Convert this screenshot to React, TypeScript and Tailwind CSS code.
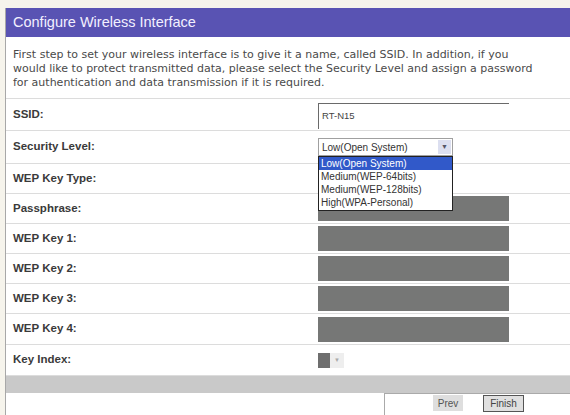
import React from "react";

const rows: [string, number][] = [
  ["WEP Key Type:", 30],
  ["Passphrase:", 30],
  ["WEP Key 1:", 30],
  ["WEP Key 2:", 30],
  ["WEP Key 3:", 30],
  ["WEP Key 4:", 31],
];

function Row({ label, h, children }: { label: string; h: number; children?: React.ReactNode }) {
  return (
    <div className="flex items-center border-b border-[#dcdcdc]" style={{ height: h }}>
      <div className="w-[312px] pl-[7px] text-[11.5px] font-bold text-[#3a3a3a]">{label}</div>
      <div className="flex h-full flex-1 items-center">{children}</div>
    </div>
  );
}

function GrayBox() {
  return <div className="h-[25px] w-[191px] bg-[#767776]" />;
}

export default function App() {
  return (
    <div
      className="h-[415px] w-[570px] overflow-hidden bg-[#f6f4ec] pt-[8px] pl-[5px]"
      style={{ fontFamily: '"Liberation Sans", Arial, sans-serif' }}
    >
      <div className="h-full border-l border-[#a8a8a8] bg-white">
        {/* header */}
        <div className="flex h-[29px] items-center bg-[#5953b3] pl-[7px] text-[14.5px] text-[#f2f0ff]">
          Configure Wireless Interface
        </div>
        {/* description */}
        <div
          className="border-b border-[#dcdcdc] px-[7px] pt-[11px] pb-[8px] text-[11px] leading-[14px] text-[#4a4a4a]"
          style={{ fontFamily: '"DejaVu Sans", Verdana, sans-serif' }}
        >
          First step to set your wireless interface is to give it a name, called SSID. In addition, if you
          <br />
          would like to protect transmitted data, please select the Security Level and assign a password
          <br />
          for authentication and data transmission if it is required.
        </div>

        <Row label="SSID:" h={32}>
          <div className="mt-[4px] flex h-[26px] w-[191px] items-center self-start border-t border-l border-[#6a6a6a] pl-[3px] text-[9.5px] text-[#444]">
            RT-N15
          </div>
        </Row>

        <Row label="Security Level:" h={33}>
          <div className="relative">
            <div className="flex h-[18px] w-[135px] items-center border border-[#a0a0a0] bg-white">
              <span className="flex-1 pl-[3px] text-[10px] text-[#333]">Low(Open System)</span>
              <span className="mr-[1px] flex h-[14px] w-[13px] items-center justify-center bg-[#dcdff0] text-[7px] text-[#556]">
                ▼
              </span>
            </div>
            {/* open dropdown list */}
            <div className="absolute top-[18px] left-0 z-10 w-[135px] border border-[#222] bg-white text-[10px] leading-[13px] text-[#333]">
              <div className="bg-[#3159c9] pl-[2px] text-white">Low(Open System)</div>
              <div className="pl-[2px]">Medium(WEP-64bits)</div>
              <div className="pl-[2px]">Medium(WEP-128bits)</div>
              <div className="pl-[2px] pb-[1px]">High(WPA-Personal)</div>
            </div>
          </div>
        </Row>

        {rows.map(([label, h]) => (
          <Row key={label} label={label} h={h}>
            {label !== "WEP Key Type:" && <GrayBox />}
          </Row>
        ))}

        <Row label="Key Index:" h={31}>
          <div className="flex h-[15px] items-center">
            <div className="h-[15px] w-[12px] bg-[#6e6e6e]" />
            <div className="flex h-[15px] w-[14px] items-center justify-center bg-[#eeeeee] text-[6px] text-[#aaa]">
              ▼
            </div>
          </div>
        </Row>

        {/* footer */}
        <div className="h-[17px] bg-[#c9c9c9]" />
        <div className="flex h-[30px]">
          <div className="flex-1" />
          <div className="flex w-[186px] items-start gap-[20px] border-t border-l border-[#aaa] pl-[48px] pt-[1px]">
            <button className="h-[16px] w-[30px] bg-[#dedede] text-[10px] text-[#555]">Prev</button>
            <button className="h-[17px] w-[41px] border border-[#555] bg-[#e0e0e0] text-[10px] text-[#444]">
              Finish
            </button>
          </div>
        </div>
      </div>
    </div>
  );
}
